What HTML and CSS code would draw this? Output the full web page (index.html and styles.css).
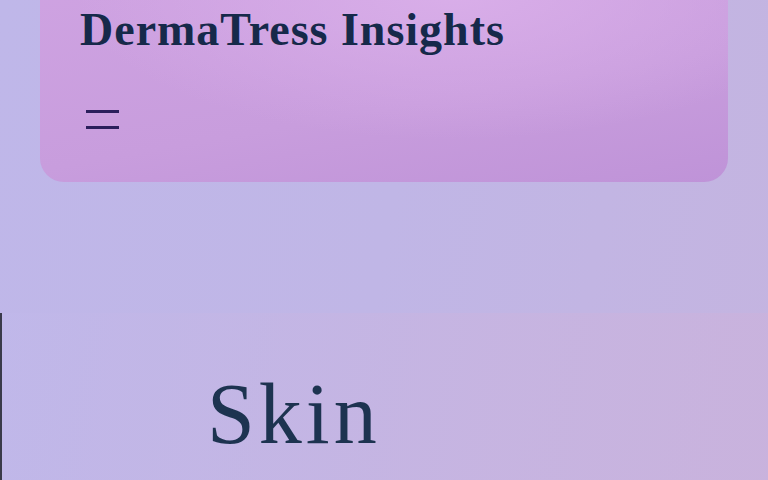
FILE: index.html
```html
<!DOCTYPE html>
<html lang="en">
<head>
<meta charset="utf-8">
<title>DermaTress Insights</title>
<link rel="stylesheet" href="styles.css">
</head>
<body>
<header class="site-header">
  <h1 class="brand">DermaTress Insights</h1>
  <button class="menu-toggle" aria-label="Menu">
    <span class="bar"></span>
    <span class="bar"></span>
  </button>
</header>
<section class="hero">
  <h2 class="hero-title">Skin</h2>
</section>
</body>
</html>
```
FILE: styles.css
```css
html, body {
  margin: 0;
  padding: 0;
  height: 100%;
}
body {
  background: linear-gradient(100deg, #bfb7e9 0%, #c0b6e6 50%, #c4b4e0 100%);
  font-family: "Liberation Serif", "DejaVu Serif", serif;
  overflow: hidden;
}
.site-header {
  margin: -30px 40px 0 40px;
  height: 212px;
  box-sizing: border-box;
  padding: 35px 40px 0 40px;
  border-radius: 24px;
  background: radial-gradient(ellipse 55% 70% at 60% 10%, #d9aee9 0%, rgba(217,174,233,0) 100%),
              linear-gradient(170deg, #cfa3e2 0%, #c89ddd 60%, #bf93d8 100%);
  display: flex;
  flex-direction: column;
}
.brand {
  margin: 0;
  font-size: 46px;
  font-weight: 700;
  line-height: 50px;
  color: #16294a;
  letter-spacing: 1px;
}
.menu-toggle {
  margin-top: 55px;
  margin-left: 6px;
  width: 33px;
  padding: 0;
  border: 0;
  background: none;
  display: flex;
  flex-direction: column;
  gap: 13px;
}
.bar {
  display: block;
  width: 33px;
  height: 3px;
  background: #2b1f5c;
}
.hero {
  margin-top: 131px;
  height: 200px;
  border-left: 2px solid #3a3a4a;
  background: linear-gradient(100deg, rgba(192,184,234,0.6) 0%, rgba(200,180,224,0.7) 60%, rgba(202,178,220,0.8) 100%);
  padding-left: 205px;
  padding-top: 51px;
  box-sizing: border-box;
}
.hero-title {
  margin: 0;
  font-size: 86px;
  font-weight: 400;
  line-height: 100px;
  letter-spacing: 4px;
  color: #1d3350;
}
```
